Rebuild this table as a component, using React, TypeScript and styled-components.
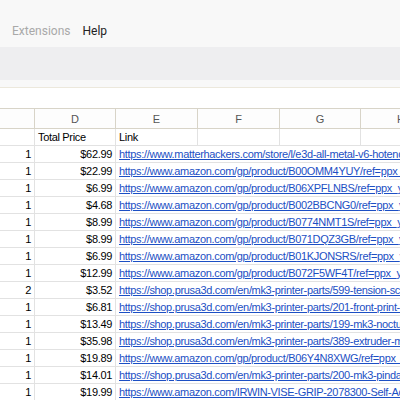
import React from "react";
import styled, { createGlobalStyle } from "styled-components";

const Global = createGlobalStyle`
  html, body { margin: 0; padding: 0; background: #ffffff; }
  body { width: 400px; height: 400px; overflow: hidden; font-family: "Liberation Sans", Arial, sans-serif; }
`;

const Page = styled.div`
  width: 400px;
  height: 400px;
  overflow: hidden;
  display: flex;
  flex-direction: column;
  & > * { flex-shrink: 0; }
`;

const MenuBar = styled.div`
  height: 47px;
  background: #f8f8f8;
  display: flex;
  align-items: flex-end;
  gap: 12px;
  padding: 0 0 9px 12px;
  box-sizing: border-box;
  font-family: Roboto, "Open Sans", sans-serif;
  font-size: 12px;
`;

const MenuItem = styled.span<{ $dim?: boolean }>`
  color: ${(p) => (p.$dim ? "#a9a9a9" : "#222222")};
`;

const Toolbar = styled.div`
  height: 33px;
  background: #eeeef0;
`;

const ToolbarGap = styled.div`
  height: 7px;
  background: #f8f8f8;
  border-bottom: 1px solid #ece8dc;
`;

const FormulaBar = styled.div`
  height: 20px;
  background: #ffffff;
`;

const Grid = styled.div`
  display: grid;
  grid-template-columns: 35px 81px 82px 82px 81px 81px;
  font-size: 11px;
  letter-spacing: -0.33px;
  color: #000;
`;

const ColHead = styled.div`
  height: 19px;
  border-top: 1px solid #d8d4c8;
  border-bottom: 1px solid #d8d4c8;
  border-right: 1px solid #d8d4c8;
  background: #fdfdfd;
  color: #555;
  display: flex;
  align-items: center;
  justify-content: center;
  font-size: 11px;
  letter-spacing: 0;
`;

const Cell = styled.div<{ $align?: "left" | "right" }>`
  height: 16px;
  border-bottom: 1px solid #e2e2e2;
  border-right: 1px solid #e2e2e2;
  padding: 0 3px;
  display: flex;
  align-items: center;
  justify-content: ${(p) => (p.$align === "right" ? "flex-end" : "flex-start")};
  white-space: nowrap;
  line-height: 16px;
`;

const LinkCell = styled(Cell)`
  border-right: none;
  grid-column: span 4;
  overflow: hidden;
`;

const Link = styled.span`
  color: #1c4fc4;
  text-decoration: underline;
`;

const rows: [string, string, string][] = [
  ["1", "$62.99", "https://www.matterhackers.com/store/l/e3d-all-metal-v6-hotend-kit"],
  ["1", "$22.99", "https://www.amazon.com/gp/product/B00OMM4YUY/ref=ppx_yo_dt_b"],
  ["1", "$6.99", "https://www.amazon.com/gp/product/B06XPFLNBS/ref=ppx_yo_dt_b"],
  ["1", "$4.68", "https://www.amazon.com/gp/product/B002BBCNG0/ref=ppx_yo_dt_b"],
  ["1", "$8.99", "https://www.amazon.com/gp/product/B0774NMT1S/ref=ppx_yo_dt_b"],
  ["1", "$8.99", "https://www.amazon.com/gp/product/B071DQZ3GB/ref=ppx_yo_dt_b"],
  ["1", "$6.99", "https://www.amazon.com/gp/product/B01KJONSRS/ref=ppx_yo_dt_b"],
  ["1", "$12.99", "https://www.amazon.com/gp/product/B072F5WF4T/ref=ppx_yo_dt_b"],
  ["2", "$3.52", "https://shop.prusa3d.com/en/mk3-printer-parts/599-tension-screw"],
  ["1", "$6.81", "https://shop.prusa3d.com/en/mk3-printer-parts/201-front-print-part"],
  ["1", "$13.49", "https://shop.prusa3d.com/en/mk3-printer-parts/199-mk3-noctua-fan"],
  ["1", "$35.98", "https://shop.prusa3d.com/en/mk3-printer-parts/389-extruder-motor"],
  ["1", "$19.89", "https://www.amazon.com/gp/product/B06Y4N8XWG/ref=ppx_yo_dt_b"],
  ["1", "$14.01", "https://shop.prusa3d.com/en/mk3-printer-parts/200-mk3-pinda-probe"],
  ["1", "$19.99", "https://www.amazon.com/IRWIN-VISE-GRIP-2078300-Self-Adjusting"],
];

export default function App() {
  return (
    <Page>
      <Global />
      <MenuBar>
        <MenuItem $dim>Extensions</MenuItem>
        <MenuItem>Help</MenuItem>
      </MenuBar>
      <Toolbar />
      <ToolbarGap />
      <FormulaBar />
      <Grid>
        <ColHead />
        <ColHead>D</ColHead>
        <ColHead>E</ColHead>
        <ColHead>F</ColHead>
        <ColHead>G</ColHead>
        <ColHead>H</ColHead>
        <Cell />
        <Cell>Total Price</Cell>
        <Cell>Link</Cell>
        <Cell />
        <Cell />
        <Cell />
        {rows.map(([q, p, l], i) => (
          <React.Fragment key={i}>
            <Cell $align="right">{q}</Cell>
            <Cell $align="right">{p}</Cell>
            <LinkCell>
              <Link>{l}</Link>
            </LinkCell>
          </React.Fragment>
        ))}
      </Grid>
    </Page>
  );
}
